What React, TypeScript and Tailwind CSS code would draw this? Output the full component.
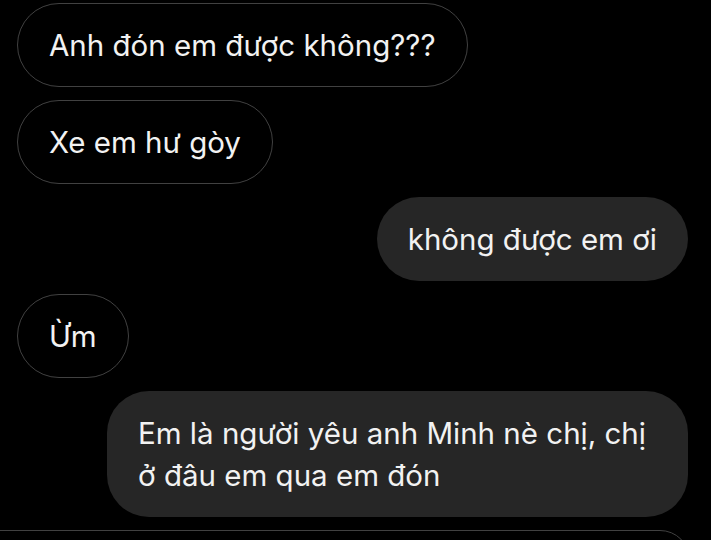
import React from "react";

const font = { fontFamily: "Inter, 'Noto Sans', sans-serif" };

function Left({ children }: { children: React.ReactNode }) {
  return (
    <div className="flex pl-[17px]">
      <div className="rounded-[42px] border border-[#414141] px-[31px] py-[20px] text-[29.5px] leading-[42px] text-[#f2f2f2] whitespace-nowrap">
        {children}
      </div>
    </div>
  );
}

function Right({ children }: { children: React.ReactNode }) {
  return (
    <div className="flex justify-end pr-[23px]">
      <div className="rounded-[42px] bg-[#262626] px-[31px] py-[21px] text-[29.5px] leading-[42px] text-[#f2f2f2] whitespace-nowrap">
        {children}
      </div>
    </div>
  );
}

export default function App() {
  return (
    <div
      className="h-[540px] w-[711px] overflow-hidden bg-black pt-[3px] flex flex-col gap-[13px]"
      style={font}
    >
      <Left>Anh đón em được không???</Left>
      <Left>Xe em hư gòy</Left>
      <Right>không được em ơi</Right>
      <Left>Ừm</Left>
      <div className="flex justify-end pr-[23px]">
        <div className="w-[581px] rounded-[42px] bg-[#262626] px-[31px] py-[21px] text-[29.5px] leading-[42px] text-[#f2f2f2] whitespace-nowrap">
          Em là người yêu anh Minh nè chị, chị
          <br />
          ở đâu em qua em đón
        </div>
      </div>
      <div className="flex">
        <div className="-ml-[30px] h-[60px] w-[720px] shrink-0 rounded-[42px] border border-[#414141]" />
      </div>
    </div>
  );
}
